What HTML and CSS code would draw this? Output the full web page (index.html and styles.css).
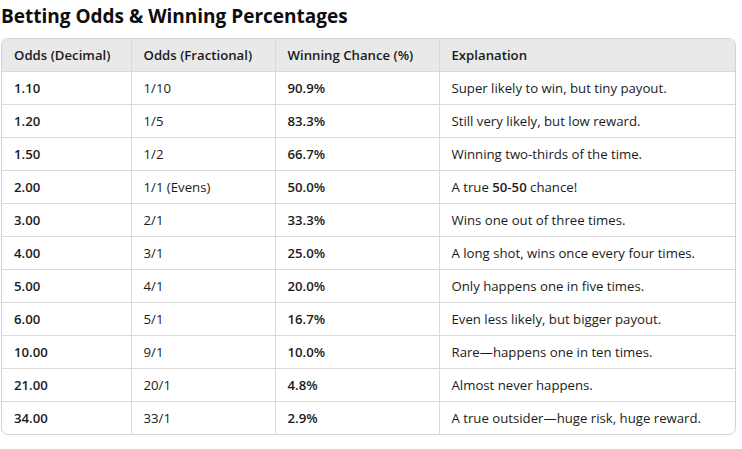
FILE: index.html
```html
<!DOCTYPE html>
<html lang="en">
<head>
<meta charset="utf-8">
<title>Betting Odds &amp; Winning Percentages</title>
<link rel="stylesheet" href="styles.css">
</head>
<body>
<h3 class="title">Betting Odds &amp; Winning Percentages</h3>
<div class="table-wrap">
<table class="odds">
<thead>
<tr><th>Odds (Decimal)</th><th>Odds (Fractional)</th><th>Winning Chance (%)</th><th>Explanation</th></tr>
</thead>
<tbody>
<tr><td><b>1.10</b></td><td>1/10</td><td><b>90.9%</b></td><td>Super likely to win, but tiny payout.</td></tr>
<tr><td><b>1.20</b></td><td>1/5</td><td><b>83.3%</b></td><td>Still very likely, but low reward.</td></tr>
<tr><td><b>1.50</b></td><td>1/2</td><td><b>66.7%</b></td><td>Winning two-thirds of the time.</td></tr>
<tr><td><b>2.00</b></td><td>1/1 (Evens)</td><td><b>50.0%</b></td><td>A true <b>50-50</b> chance!</td></tr>
<tr><td><b>3.00</b></td><td>2/1</td><td><b>33.3%</b></td><td>Wins one out of three times.</td></tr>
<tr><td><b>4.00</b></td><td>3/1</td><td><b>25.0%</b></td><td>A long shot, wins once every four times.</td></tr>
<tr><td><b>5.00</b></td><td>4/1</td><td><b>20.0%</b></td><td>Only happens one in five times.</td></tr>
<tr><td><b>6.00</b></td><td>5/1</td><td><b>16.7%</b></td><td>Even less likely, but bigger payout.</td></tr>
<tr><td><b>10.00</b></td><td>9/1</td><td><b>10.0%</b></td><td>Rare—happens one in ten times.</td></tr>
<tr><td><b>21.00</b></td><td>20/1</td><td><b>4.8%</b></td><td>Almost never happens.</td></tr>
<tr><td><b>34.00</b></td><td>33/1</td><td><b>2.9%</b></td><td>A true outsider—huge risk, huge reward.</td></tr>
</tbody>
</table>
</div>
</body>
</html>
```
FILE: styles.css
```css
html, body {
  margin: 0;
  padding: 0;
  background: #ffffff;
}
body {
  font-family: "Open Sans", "Noto Sans", sans-serif;
  color: #1b1b1b;
  width: 742px;
  height: 449px;
  overflow: hidden;
}
.title {
  margin: 0;
  padding: 4px 0 0 1px;
  height: 38px;
  box-sizing: border-box;
  font-size: 19px;
  font-weight: 700;
  line-height: 24px;
  color: #0d0d0d;
}
.table-wrap {
  margin-left: 1px;
  width: 735px;
  box-sizing: border-box;
  border: 1px solid #d3d3d3;
  border-radius: 7px;
  overflow: hidden;
}
.odds {
  width: 100%;
  border-collapse: collapse;
  table-layout: fixed;
  font-size: 13.2px;
}
.odds th:nth-child(1) { width: 129px; }
.odds th:nth-child(2) { width: 144px; }
.odds th:nth-child(3) { width: 164px; }
.odds th, .odds td {
  height: 33px;
  box-sizing: border-box;
  padding: 0 12px;
  text-align: left;
  border-left: 1px solid #d9d9d9;
  border-top: 1px solid #d9d9d9;
  vertical-align: middle;
  white-space: nowrap;
}
.odds th:first-child, .odds td:first-child { border-left: none; }
.odds thead th {
  border-top: none;
  height: 32px;
  background: #e9e9e9;
  font-weight: 600;
  color: #1b1b1b;
}
.odds b { font-weight: 600; }
```
